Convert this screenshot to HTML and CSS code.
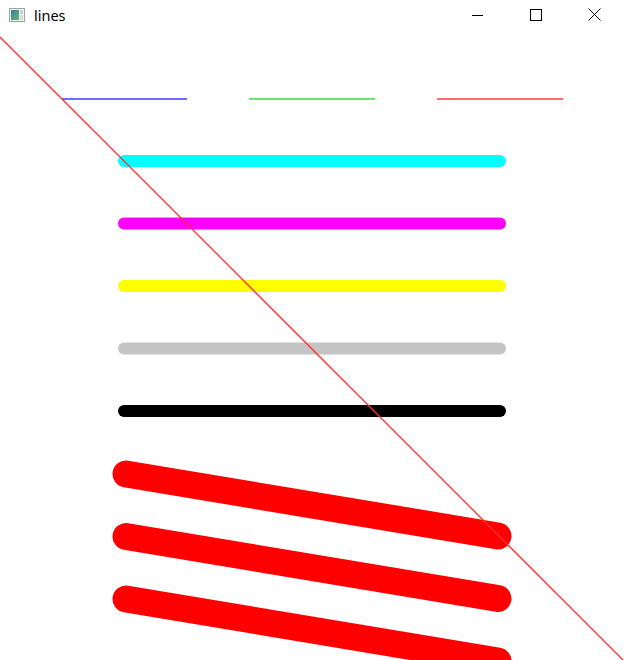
FILE: index.html
```html
<!DOCTYPE html>
<html>
<head>
<meta charset="utf-8">
<link rel="stylesheet" href="styles.css">
</head>
<body>
<div class="window">
  <div class="titlebar">
    <div class="title">
      <svg class="app-icon" width="16" height="14" viewBox="0 0 16 14">
        <defs>
          <linearGradient id="g1" x1="0" y1="0" x2="1" y2="1">
            <stop offset="0" stop-color="#2f7fa0"/>
            <stop offset="1" stop-color="#6fb070"/>
          </linearGradient>
        </defs>
        <rect x="0.5" y="0.5" width="15" height="13" fill="#f4f4f4" stroke="#9aa4a8"/>
        <rect x="2" y="2" width="8" height="10" fill="url(#g1)"/>
        <rect x="11" y="2" width="3" height="4" fill="#c8d0cc"/>
        <rect x="11" y="7" width="3" height="5" fill="#d8dcd8"/>
      </svg>
      <span class="title-text">lines</span>
    </div>
    <div class="controls">
      <div class="ctl">
        <svg width="12" height="12" viewBox="0 0 12 12"><path d="M1 6.5H12" stroke="#000" stroke-width="1"/></svg>
      </div>
      <div class="ctl">
        <svg width="12" height="12" viewBox="0 0 12 12"><rect x="0.5" y="0.5" width="11" height="11" fill="none" stroke="#000" stroke-width="1"/></svg>
      </div>
      <div class="ctl">
        <svg width="13" height="13" viewBox="0 0 13 13"><path d="M0.5 0.5L12.5 12.5M12.5 0.5L0.5 12.5" stroke="#000" stroke-width="1"/></svg>
      </div>
    </div>
  </div>
  <svg class="canvas" width="624" height="629" viewBox="0 31 624 629">
    <line x1="62" y1="99" x2="187" y2="99" stroke="#3a3aff" stroke-width="1.6"/>
    <line x1="249" y1="99" x2="375" y2="99" stroke="#3ae03a" stroke-width="1.6"/>
    <line x1="437" y1="99" x2="563" y2="99" stroke="#ff3a3a" stroke-width="1.6"/>

    <line x1="124" y1="161" x2="500" y2="161" stroke="#00ffff" stroke-width="12" stroke-linecap="round"/>
    <line x1="124" y1="223.5" x2="500" y2="223.5" stroke="#ff00ff" stroke-width="12" stroke-linecap="round"/>
    <line x1="124" y1="286" x2="500" y2="286" stroke="#ffff00" stroke-width="12" stroke-linecap="round"/>
    <line x1="124" y1="348.5" x2="500" y2="348.5" stroke="#c4c4c4" stroke-width="12" stroke-linecap="round"/>
    <line x1="124" y1="411" x2="500" y2="411" stroke="#000000" stroke-width="12" stroke-linecap="round"/>

    <line x1="126" y1="474" x2="498" y2="536" stroke="#ff0000" stroke-width="27" stroke-linecap="round"/>
    <line x1="126" y1="536.5" x2="498" y2="598.5" stroke="#ff0000" stroke-width="27" stroke-linecap="round"/>
    <line x1="126" y1="599" x2="498" y2="661" stroke="#ff0000" stroke-width="27" stroke-linecap="round"/>

    <line x1="0" y1="37" x2="624" y2="661" stroke="#ff3030" stroke-width="1.3"/>
  </svg>
</div>
</body>
</html>
```

FILE: styles.css
```css
html, body {
  margin: 0;
  padding: 0;
  background: #ffffff;
  overflow: hidden;
}

.window {
  width: 624px;
  height: 660px;
  display: flex;
  flex-direction: column;
  background: #ffffff;
}

.titlebar {
  height: 31px;
  display: flex;
  align-items: center;
  justify-content: space-between;
  flex-shrink: 0;
}

.title {
  display: flex;
  align-items: center;
  padding-left: 9px;
  gap: 9px;
}

.app-icon {
  display: block;
  margin-top: -2px;
}

.title-text {
  font-family: "Noto Sans", "Open Sans", sans-serif;
  font-size: 14.5px;
  color: #000;
  margin-top: -1px;
}

.controls {
  display: flex;
  height: 31px;
}

.ctl {
  width: 59px;
  height: 31px;
  display: flex;
  align-items: center;
  justify-content: center;
}

.ctl svg {
  display: block;
  margin-top: -2px;
}

.canvas {
  display: block;
  flex-shrink: 0;
}
```
